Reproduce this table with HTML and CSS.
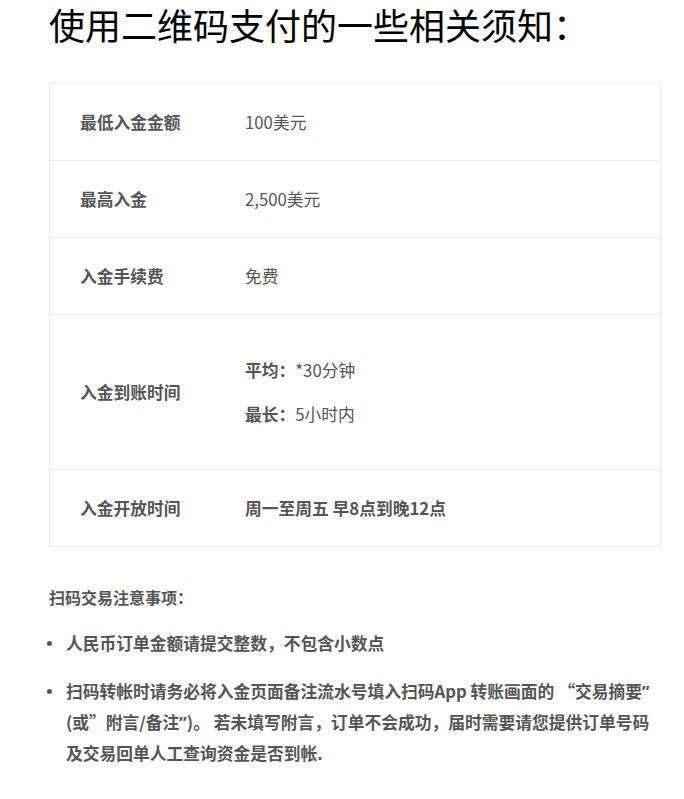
FILE: index.html
```html
<!DOCTYPE html>
<html lang="zh-CN">
<head>
<meta charset="utf-8">
<title>二维码支付须知</title>
<link rel="stylesheet" href="styles.css">
</head>
<body>
<main class="page">
  <h1 class="title">使用二维码支付的一些相关须知：</h1>
  <table class="info">
    <tbody>
      <tr>
        <th class="label">最低入金金额</th>
        <td class="value">100美元</td>
      </tr>
      <tr>
        <th class="label">最高入金</th>
        <td class="value">2,500美元</td>
      </tr>
      <tr>
        <th class="label">入金手续费</th>
        <td class="value">免费</td>
      </tr>
      <tr class="tall">
        <th class="label">入金到账时间</th>
        <td class="value">
          <p class="line"><strong>平均：</strong>*30分钟</p>
          <p class="line"><strong>最长：</strong>5小时内</p>
        </td>
      </tr>
      <tr>
        <th class="label">入金开放时间</th>
        <td class="value"><strong>周一至周五 早8点到晚12点</strong></td>
      </tr>
    </tbody>
  </table>
  <h2 class="notes-title">扫码交易注意事项：</h2>
  <ul class="notes">
    <li>人民币订单金额请提交整数，不包含小数点</li>
    <li><span>扫码转帐时请务必将入金页面备注流水号填入扫码App 转账画面的 “交易摘要<span class="pq">”</span> (或”附言/备注<span class="pq">”</span>)。 若未填写附言，订单不会成功，届时需要请您提供订单号码及交易回单人工查询资金是否到帐.</span></li>
  </ul>
</main>
</body>
</html>
```

FILE: styles.css
```css
html, body {
  margin: 0;
  padding: 0;
  background: #fff;
}

body {
  font-family: "Noto Sans CJK SC", "Noto Sans", sans-serif;
  color: #555;
}

.page {
  padding: 1px 0 0 49px;
  width: 612px;
}

.title {
  margin: 0 0 35px 0;
  font-size: 36px;
  line-height: 47px;
  font-weight: 400;
  color: #000;
}

.info {
  width: 612px;
  border-collapse: collapse;
  border: 1px solid #ececec;
}

.info tr {
  border-bottom: 1px solid #ececec;
}

.label,
.value {
  padding: 25px 0 25px 30px;
  font-size: 16.75px;
  line-height: 26px;
  text-align: left;
  vertical-align: middle;
  color: #555;
}

.label {
  width: 135px;
  font-weight: 700;
}

.value {
  font-weight: 400;
}

.value strong {
  font-weight: 700;
}

.tall .label,
.tall .value {
  padding-top: 42px;
  padding-bottom: 42px;
}

.line {
  margin: 0;
}

.line + .line {
  margin-top: 18px;
}

.notes-title {
  margin: 38px 0 0 0;
  font-size: 16px;
  line-height: 24px;
  font-weight: 700;
  color: #555;
}

.notes {
  list-style: none;
  margin: 19px 0 0 0;
  padding: 0;
  font-size: 16.75px;
  line-height: 30px;
  font-weight: 700;
  color: #555;
}

.notes li {
  display: flex;
  align-items: flex-start;
}

.notes li + li {
  margin-top: 18px;
}

.notes li::before {
  content: "";
  flex: none;
  width: 5px;
  height: 5px;
  border-radius: 50%;
  background: #555;
  margin: 13px 14px 0 -2px;
}

.pq {
  font-family: "Noto Sans", "Liberation Sans", sans-serif;
}
```
